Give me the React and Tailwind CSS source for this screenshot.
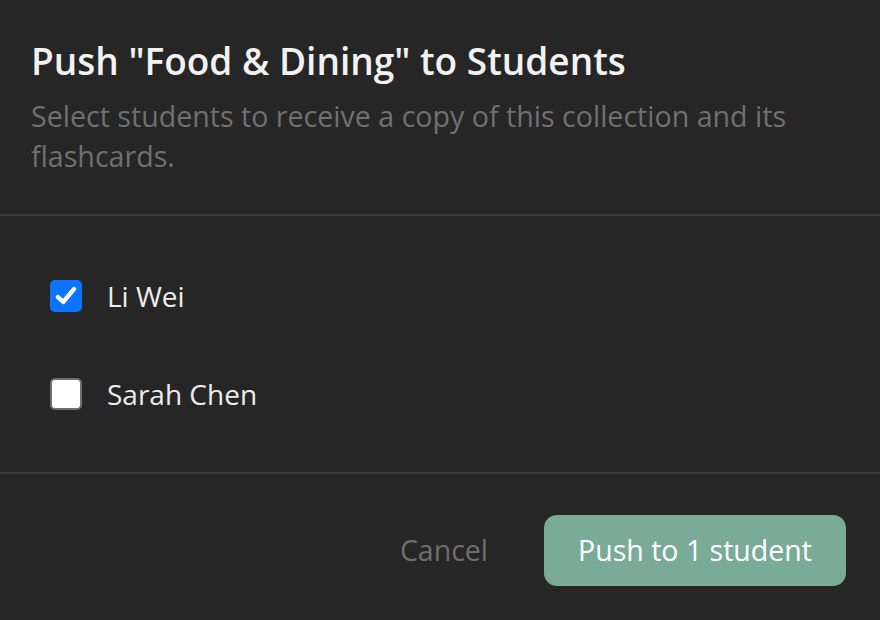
function Checkbox({ checked }) {
  if (checked) {
    return (
      <span className="flex h-[32px] w-[32px] shrink-0 items-center justify-center rounded-[5px] bg-[#0b74ff]">
        <svg viewBox="0 0 24 24" className="h-[26px] w-[26px]" fill="none" stroke="white" strokeWidth="4" strokeLinecap="round" strokeLinejoin="round">
          <path d="M4.5 13l5 4.5L19.5 5.5" />
        </svg>
      </span>
    );
  }
  return <span className="h-[32px] w-[32px] shrink-0 rounded-[5px] border-2 border-[#6f6f6f] bg-white" />;
}

const students = [
  { name: "Li Wei", checked: true },
  { name: "Sarah Chen", checked: false },
];

export default function App() {
  return (
    <div className="flex min-h-[620px] w-[880px] flex-col bg-[#262626] font-['Open_Sans',sans-serif]">
      <div className="px-[31px] pt-[37px] pb-[38px]">
        <h2 className="text-[37px] font-semibold leading-[48px] text-[#f2f2f2]">
          Push "Food &amp; Dining" to Students
        </h2>
        <p className="mt-[11px] text-[28.6px] leading-[40px] text-[#707070]">
          Select students to receive a copy of this collection and its flashcards.
        </p>
      </div>
      <div className="h-[2px] bg-[#3c3c3c]" />
      <div className="flex flex-col gap-[50px] px-[50px] pt-[56px] pb-[54px]">
        {students.map((s) => (
          <label key={s.name} className="flex h-[48px] items-center gap-[25px]">
            <Checkbox checked={s.checked} />
            <span className="text-[28px] text-[#ececec]">{s.name}</span>
          </label>
        ))}
      </div>
      <div className="h-[2px] bg-[#3c3c3c]" />
      <div className="flex items-center justify-end gap-[56px] px-[34px] pt-[41px] pb-[34px]">
        <button className="text-[28.5px] text-[#6e6e6e]">Cancel</button>
        <button className="flex h-[71px] w-[302px] items-center justify-center rounded-[13px] bg-[#7aab99] text-[28.5px] text-white">
          Push to 1 student
        </button>
      </div>
    </div>
  );
}
